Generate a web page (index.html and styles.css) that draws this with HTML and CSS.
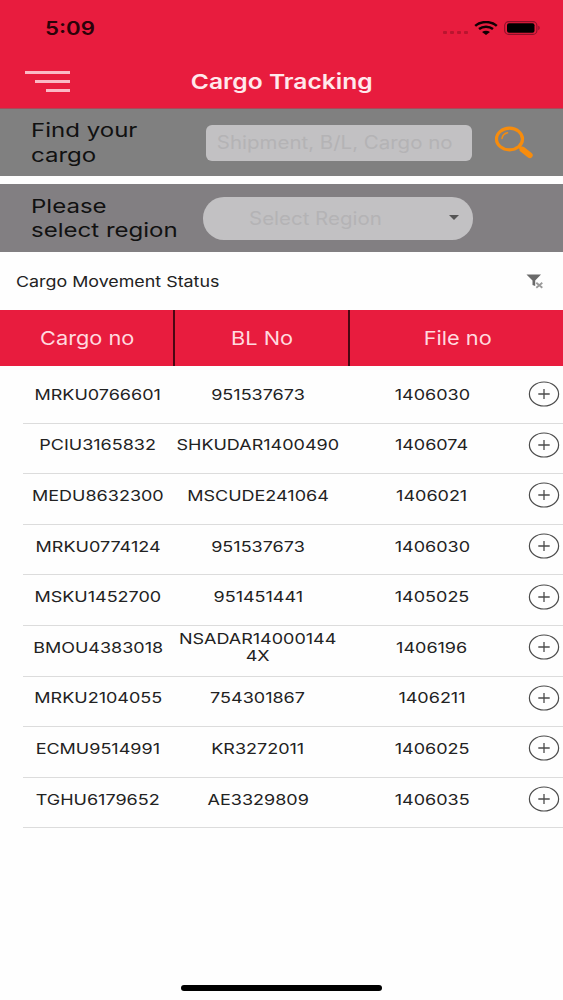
FILE: index.html
```html
<!DOCTYPE html>
<html lang="en">
<head>
    <meta charset="UTF-8">
    <meta name="viewport" content="width=device-width, initial-scale=1.0">
    <title>Cargo Tracking</title>
    <link rel="stylesheet" href="styles.css">
</head>
<body>
    <header>
        <div class="status_bar">
            <span class="time wide">5:09</span>
            <div class="status_icons">
                <span class="signal"><i></i><i></i><i></i><i></i></span>
                <svg class="wifi" width="24" height="14" viewBox="0 0 24 14">
                    <path d="M1.2 4.9C7-.2 17-.2 22.800 4.900M5 8.100c4-3.200 10-3.200 14 0" fill="none" stroke="#100004" stroke-width="2.500"/>
                    <path d="M8 10.900c2.500-1.700 5.500-1.700 8 0L12 14z" fill="#100004"/>
                </svg>
                <svg class="battery" width="37" height="14" viewBox="0 0 37 14">
                    <rect x=".7" y=".6" width="32.200" height="12.800" rx="4" fill="none" stroke="#8b1029" stroke-width="1.100"/>
                    <rect x="3" y="2.200" width="27.500" height="9.600" rx="2" fill="#000"/>
                    <path d="M34.300 4.800c1.800.6 1.800 3.800 0 4.400z" fill="#8b1029"/>
                </svg>
            </div>
        </div>
        <div class="title_bar">
            <div class="menu"><i></i><i></i><i></i></div>
            <h1><span class="wide">Cargo Tracking</span></h1>
        </div>
    </header>

    <div class="search find">
        <label><span class="wide">Find your<br>cargo</span></label>
        <div class="field"><span class="wide">Shipment, B/L, Cargo no</span></div>
        <svg class="glass" width="40" height="34" viewBox="0 0 40 34">
            <ellipse cx="15.500" cy="13" rx="13" ry="10.800" fill="none" stroke="#f78c0c" stroke-width="3.200"/>
            <path d="M8 12.500c.4-3 2.500-5 5.500-5.700" fill="none" stroke="#f78c0c" stroke-width="1.500" stroke-linecap="round"/>
            <path d="M25 20.500l3.500 2.800" stroke="#f78c0c" stroke-width="3"/>
            <path d="M28.500 23.500l7.300 5.800" stroke="#f78c0c" stroke-width="5.800" stroke-linecap="round"/>
        </svg>
    </div>
    <div class="search region">
        <label><span class="wide">Please<br>select region</span></label>
        <div class="field select"><span class="wide">Select Region</span><i class="arrow"></i></div>
    </div>

    <div class="caption">
        <span class="wide">Cargo Movement Status</span>
        <svg width="18" height="15" viewBox="0 0 18 15">
            <path d="M.5.500h14.500L9.200 6.500V12L6.500 11V6.500z" fill="#6a6a6a"/>
            <path d="M10.300 8.700l6 5M16.300 8.700l-6 5" stroke="#999" stroke-width="1.800"/>
        </svg>
    </div>

    <div class="table_head">
        <div><span class="wide">Cargo no</span></div>
        <div><span class="wide">BL No</span></div>
        <div><span class="wide">File no</span></div>
    </div>
    <ul id="list"></ul>

    <div class="home_bar"></div>

    <script>
    var cargos = [
        ['MRKU0766601', '951537673', '1406030'],
        ['PCIU3165832', 'SHKUDAR1400490', '1406074'],
        ['MEDU8632300', 'MSCUDE241064', '1406021'],
        ['MRKU0774124', '951537673', '1406030'],
        ['MSKU1452700', '951451441', '1405025'],
        ['BMOU4383018', 'NSADAR14000144<br>4X', '1406196'],
        ['MRKU2104055', '754301867', '1406211'],
        ['ECMU9514991', 'KR3272011', '1406025'],
        ['TGHU6179652', 'AE3329809', '1406035']
    ];
    var plus = '<svg width="32" height="26" viewBox="0 0 32 26">' +
        '<ellipse cx="16" cy="13" rx="14.600" ry="12" fill="none" stroke="#4c4c4c" stroke-width="1.200"/>' +
        '<path d="M10.300 13h11.400M16 8v10" stroke="#4c4c4c" stroke-width="1.300"/></svg>';
    var list = document.getElementById('list');
    for(var i = 0; i < cargos.length; i++){
        var li = document.createElement('li');
        for(var j = 0; j < 3; j++){
            li.innerHTML += '<div><span class="wide">' + cargos[i][j] + '</span></div>';
        }
        li.innerHTML += plus;
        list.append(li);
    }
    </script>
</body>
</html>
```
FILE: styles.css
```css
* {
    margin: 0;
    padding: 0;
    box-sizing: border-box;
}

body {
    display: flex;
    flex-direction: column;
    height: 1000px;
    background: #fefefe;
    font-family: Inter, "Liberation Sans", sans-serif;
    color: #222;
    overflow: hidden;
}

li {
    list-style: none;
}

/* stretched lettering */
.wide {
    display: inline-block;
    white-space: nowrap;
    transform: scaleX(1.2);
}

header {
    height: 109px;
    background: #e81c3e;
    border-bottom: 1px solid #a94b59;
}

.status_bar {
    display: flex;
    justify-content: space-between;
    align-items: center;
    height: 56px;
    padding: 0 22px 0 45px;
}

.time {
    transform-origin: left;
    font-size: 18.500px;
    font-weight: 600;
    color: #2b0209;
}

.status_icons {
    display: flex;
    align-items: center;
}

.signal {
    display: flex;
    gap: 3px;
    margin: 9px 6px 0 0;
}

.signal i {
    width: 4px;
    height: 3px;
    border-radius: 1px;
    background: #b9152f;
}

.wifi {
    margin-right: 6px;
}

.title_bar {
    display: flex;
    align-items: center;
    height: 50px;
    padding-left: 25px;
}

.menu {
    display: flex;
    flex-direction: column;
    align-items: flex-end;
    gap: 6px;
    width: 45px;
}

.menu i {
    width: 45px;
    height: 3px;
    background: #fbb9c5;
}

.menu i:nth-child(2) {
    width: 35px;
}

.menu i:nth-child(3) {
    width: 24px;
}

h1 {
    flex: 1;
    margin-right: 69px;
    text-align: center;
    font-size: 20.500px;
    font-weight: 600;
    color: #ffe9ec;
}

.search {
    display: flex;
    align-items: center;
    height: 67px;
    background: #808080;
}

.region {
    height: 68px;
    margin-top: 8px;
    background: #827f82;
}

.search label {
    width: 175px;
    margin-left: 31px;
    padding-top: 2px;
    font-size: 19px;
    line-height: 24.500px;
    color: #111;
}

.search label .wide {
    transform: scaleX(1.265);
    transform-origin: left;
}

.field {
    display: flex;
    align-items: center;
    justify-content: center;
    width: 266px;
    height: 36px;
    padding-right: 9px;
    border-radius: 6px;
    background: #c2c1c3;
    font-size: 18px;
    color: #b4b3b5;
}

.field .wide {
    transform: scaleX(1.137);
}

.select {
    position: relative;
    width: 270px;
    height: 43px;
    margin-left: -3px;
    padding-right: 46px;
    border-radius: 21px;
}

.arrow {
    position: absolute;
    right: 14px;
    top: 18px;
    border: 5px solid transparent;
    border-top-color: #555;
    border-bottom: 0;
}

.glass {
    margin-left: 22px;
}

.caption {
    display: flex;
    justify-content: space-between;
    align-items: center;
    height: 58px;
    padding: 0 19px 0 16px;
    font-size: 15px;
}

.caption .wide {
    transform: scaleX(1.19);
    transform-origin: left;
}

.table_head {
    display: grid;
    grid-template-columns: 175px 175px 1fr;
    height: 56px;
    background: #e81c3e;
    font-size: 19px;
    color: #ffd9df;
}

.table_head .wide {
    transform: translateX(1px) scaleX(1.145);
}

.table_head div {
    display: flex;
    align-items: center;
    justify-content: center;
    border-right: 2px solid #4a0612;
}

.table_head div:last-child {
    border: none;
}

#list {
    margin: 7px 0 0 23px;
}

#list li {
    display: grid;
    grid-template-columns: 150px 170px 178px 1fr;
    align-items: center;
    height: 50.600px;
    padding-bottom: 7px;
    border-bottom: 1px solid #dcdcdc;
    font-size: 15px;
    line-height: 17px;
    text-align: center;
}

#list svg {
    margin-left: 7px;
}

.home_bar {
    width: 201px;
    height: 6px;
    margin: auto auto 9px;
    border-radius: 3px;
    background: #000;
}
```
